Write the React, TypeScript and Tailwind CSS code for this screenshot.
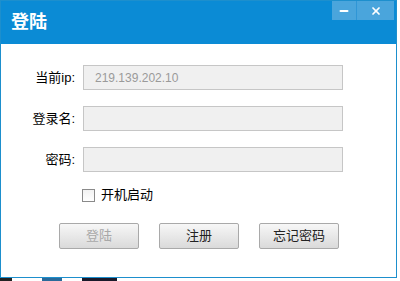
import { Minus, X } from "lucide-react";

const FONT = { fontFamily: '"Liberation Sans", "Noto Sans CJK SC", sans-serif' };

function Field({ label, value }: { label: string; value?: string }) {
  return (
    <div className="flex items-center h-[25px]">
      <div className="w-[76px] pr-[2px] text-right text-[13px] text-black">{label}</div>
      <div className="ml-[6px] w-[260px] h-[25px] border border-[#c6c6c6] bg-[#f0f0f0] flex items-center pl-[11px] text-[12px] text-[#9a9a9a]">
        {value}
      </div>
    </div>
  );
}

function Btn({ children, disabled }: { children: string; disabled?: boolean }) {
  return (
    <button
      className={`w-[80px] h-[26px] rounded-[2px] border border-[#a9a9a9] bg-gradient-to-b from-[#f7f7f7] to-[#dadada] text-[13px] ${
        disabled ? "text-[#a8a8a8]" : "text-[#222]"
      }`}
    >
      {children}
    </button>
  );
}

export default function App() {
  return (
    <div className="w-[400px] h-[281px] bg-white overflow-hidden" style={FONT}>
      <div className="w-[397px] h-[278px] border border-[#1d8fcd] flex flex-col">
        {/* title bar */}
        <div className="h-[43px] bg-[#0b8bd5] flex items-start justify-between shrink-0">
          <div className="pl-[10px] pt-[10px] text-[18px] font-bold text-white leading-[22px]">登陆</div>
          <div className="flex mr-[2px]">
            <div className="w-[25px] h-[19px] bg-[#4aa5dc] border-r border-[#2f96d6] flex items-center justify-center">
              <Minus className="w-[12px] h-[12px] text-white" strokeWidth={4} />
            </div>
            <div className="w-[37px] h-[19px] bg-[#4aa5dc] flex items-center justify-center">
              <X className="w-[12px] h-[12px] text-white" strokeWidth={3.5} />
            </div>
          </div>
        </div>

        {/* body */}
        <div className="flex-1 flex flex-col pt-[21px]">
          <div className="flex flex-col gap-[16px]">
            <Field label="当前ip:" value="219.139.202.10" />
            <Field label="登录名:" />
            <Field label="密码:" />
          </div>
          <div className="flex items-center ml-[81px] mt-[16px] h-[14px]">
            <div className="w-[13px] h-[13px] border border-[#8a8a8a] bg-gradient-to-b from-[#f2f2f2] to-white" />
            <span className="ml-[6px] text-[13px] text-black">开机启动</span>
          </div>
          <div className="flex ml-[58px] mt-[21px] gap-[20px]">
            <Btn disabled>登陆</Btn>
            <Btn>注册</Btn>
            <Btn>忘记密码</Btn>
          </div>
        </div>
      </div>
      <div className="flex h-[3px]">
        <div className="w-[12px] bg-[#222]" />
        <div className="w-[30px]" />
        <div className="w-[20px] bg-[#2a6a9a]" />
        <div className="w-[20px]" />
        <div className="w-[35px] bg-[#1a1a2a]" />
      </div>
    </div>
  );
}
